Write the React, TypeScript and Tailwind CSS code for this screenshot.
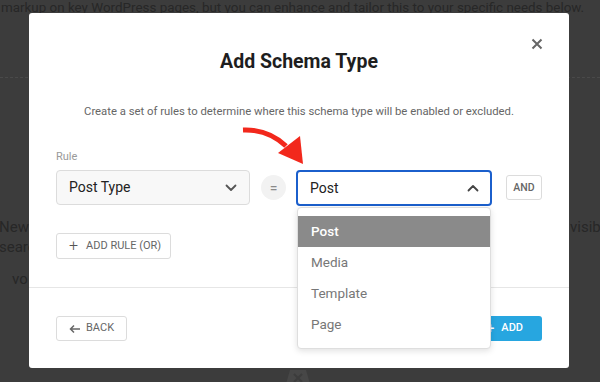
import React from "react";

const font = { fontFamily: "Roboto, 'Noto Sans', Arial, sans-serif" };

function ChevronDown() {
  return (
    <svg width="12" height="8" viewBox="0 0 12 8" fill="none">
      <path d="M1.5 1.5 L6 6 L10.5 1.5" stroke="#555" strokeWidth="1.8" strokeLinecap="round" strokeLinejoin="round" />
    </svg>
  );
}
function ChevronUp() {
  return (
    <svg width="12" height="8" viewBox="0 0 12 8" fill="none">
      <path d="M1.5 6.5 L6 2 L10.5 6.5" stroke="#444" strokeWidth="1.8" strokeLinecap="round" strokeLinejoin="round" />
    </svg>
  );
}

export default function App() {
  return (
    <div className="relative h-[382px] w-[600px] overflow-hidden bg-[#3c3c3c]" style={font}>
      {/* background page (behind overlay) */}
      <div className="flex flex-col text-[#272727]">
        <div className="pl-[1px] text-[13.4px] leading-[16px] whitespace-nowrap">
          markup on key WordPress pages, but you can enhance and tailor this to your specific needs below.
        </div>
        <div className="mt-[61px] border-t border-dashed border-[#4a4a4a]" />
        <div className="mt-[139px] flex justify-between text-[15px] leading-[20px]">
          <span className="-ml-[1px]">New s</span>
          <span className="pl-[1px] w-[31px] overflow-hidden whitespace-nowrap">visibili</span>
        </div>
        <div className="text-[15px] leading-[20px] -ml-[1px]">search</div>
        <div className="pl-[12px] mt-[12px] text-[15px] leading-[20px]">vo</div>
      </div>
      <svg className="absolute left-[280px] top-[364px]" width="36" height="20" viewBox="0 0 36 20">
        <path d="M6 20 L10 6 L26 6 L30 20 Z" fill="#474747" />
        <path d="M14 10 L22 18 M22 10 L14 18" stroke="#3c3c3c" strokeWidth="2" />
      </svg>

      {/* modal */}
      <div className="absolute left-[29px] top-[13px] w-[540px] h-[355px] rounded-[3px] bg-white flex flex-col">
        <button className="absolute right-[26px] top-[25px] w-[12px] h-[12px] flex items-center justify-center">
          <svg width="12" height="12" viewBox="0 0 12 12">
            <path d="M1.5 1.5 L10.5 10.5 M10.5 1.5 L1.5 10.5" stroke="#666" strokeWidth="2" />
          </svg>
        </button>

        <h2 className="mt-[35px] text-center text-[19.5px] leading-[28px] font-bold text-[#1e1e1e]">Add Schema Type</h2>
        <p className="mt-[27px] text-center text-[11.3px] leading-[18px] text-[#666]">
          Create a set of rules to determine where this schema type will be enabled or excluded.
        </p>

        <div className="px-[27px] mt-[29px] flex flex-col">
          <div className="text-[11px] leading-[14px] text-[#9a9a9a]">Rule</div>
          <div className="mt-[6px] flex items-start">
            <div className="w-[194px] h-[35px] rounded-[4px] border border-[#dcdcdc] bg-[#f8f8f8] flex items-center justify-between pl-[12px] pr-[12px]">
              <span className="text-[14px] text-[#222]">Post Type</span>
              <ChevronDown />
            </div>
            <div className="ml-[11px] mt-[5px] w-[25px] h-[25px] rounded-full bg-[#f2f2f2] flex items-center justify-center text-[14px] leading-none text-[#8a8a8a]">=</div>
            <div className="relative ml-[10px] w-[196px]">
              <div className="h-[36px] rounded-[4px] border-2 border-[#1b5fcc] bg-white flex items-center justify-between pl-[12px] pr-[11px]">
                <span className="text-[14px] text-[#222]">Post</span>
                <ChevronUp />
              </div>
            </div>
            <div className="ml-[14px] mt-[5px] w-[36px] h-[25px] rounded-[3px] border border-[#dcdcdc] flex items-center justify-center text-[10.5px] font-medium text-[#666]">AND</div>
          </div>
          <div className="mt-[27px]">
            <button className="w-[115px] h-[26px] rounded-[3px] border border-[#dcdcdc] flex items-center pl-[12px] text-[11px] text-[#666]">
              <span className="text-[16px] leading-none mr-[8px] font-light text-[#555]">+</span>
              ADD RULE (OR)
            </button>
          </div>
        </div>

        <div className="mt-[28px] border-t border-[#e6e6e6]" />

        <div className="px-[27px] pt-[28px] flex items-center justify-between">
          <button className="w-[71px] h-[25px] rounded-[3px] border border-[#dcdcdc] flex items-center pl-[12px] text-[11px] text-[#666]">
            <svg width="12" height="10" viewBox="0 0 12 10" className="mr-[5px]">
              <path d="M11 5 L1.5 5 M5 1.5 L1.5 5 L5 8.5" stroke="#666" strokeWidth="1.5" fill="none" />
            </svg>
            BACK
          </button>
          <button className="w-[72px] h-[25px] rounded-[3px] bg-[#27a6e0] flex items-center justify-end pr-[19px] text-[11px] font-medium text-white">
            <span className="text-[15px] leading-none mr-[7px]">+</span>
            ADD
          </button>
        </div>

        {/* open dropdown menu */}
        <div className="absolute left-[268px] top-[194px] w-[194px] rounded-[4px] border border-[#dedede] bg-white shadow-[0_2px_6px_rgba(0,0,0,0.12)] py-[8px]">
          <div className="h-[31px] bg-[#8a8a8a] flex items-center pl-[13px] text-[13.5px] font-medium text-white">Post</div>
          <div className="h-[31px] flex items-center pl-[13px] text-[13.5px] text-[#777]">Media</div>
          <div className="h-[31px] flex items-center pl-[13px] text-[13.5px] text-[#777]">Template</div>
          <div className="h-[31px] flex items-center pl-[13px] text-[13.5px] text-[#777]">Page</div>
        </div>
      </div>

      {/* red annotation arrow */}
      <svg className="absolute left-0 top-0 pointer-events-none" width="600" height="382" viewBox="0 0 600 382">
        <path d="M243 130 Q268 129 286 146" stroke="#f2281c" strokeWidth="5" fill="none" />
        <polygon points="278,153 300,136 303,164" fill="#f2281c" />
      </svg>
    </div>
  );
}
